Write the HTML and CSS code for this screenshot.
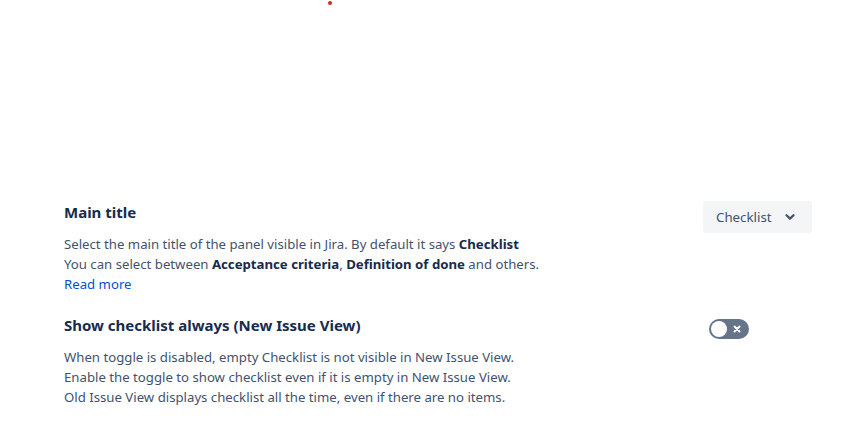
FILE: index.html
```html
<!DOCTYPE html>
<html lang="en">
<head>
<meta charset="utf-8">
<title>Checklist settings</title>
<link rel="stylesheet" href="styles.css">
</head>
<body>
<span class="dot"></span>
<main class="settings">
  <section class="row">
    <div class="info">
      <h3 class="title">Main title</h3>
      <p class="desc">Select the main title of the panel visible in Jira. By default it says <b>Checklist</b><br>You can select between <b>Acceptance criteria</b>, <b>Definition of done</b> and others.<br><a href="#" class="link">Read more</a></p>
    </div>
    <div class="control">
      <button class="select">Checklist
        <svg class="chev" width="10" height="8" viewBox="0 0 10 8"><path d="M1.5 2.2 L5 5.6 L8.5 2.2" fill="none" stroke="#42526e" stroke-width="2.2" stroke-linecap="round" stroke-linejoin="round"/></svg>
      </button>
    </div>
  </section>
  <section class="row row2">
    <div class="info">
      <h3 class="title">Show checklist always (New Issue View)</h3>
      <p class="desc">When toggle is disabled, empty Checklist is not visible in New Issue View.<br>Enable the toggle to show checklist even if it is empty in New Issue View.<br>Old Issue View displays checklist all the time, even if there are no items.</p>
    </div>
    <div class="control">
      <span class="toggle-wrap">
        <span class="toggle">
          <span class="knob"></span>
          <svg class="x" width="8" height="8" viewBox="0 0 8 8"><path d="M1.5 1.5 L6.5 6.5 M6.5 1.5 L1.5 6.5" stroke="#fff" stroke-width="2" stroke-linecap="round"/></svg>
        </span>
      </span>
    </div>
  </section>
</main>
</body>
</html>
```
FILE: styles.css
```css
html, body {
  margin: 0;
  padding: 0;
  background: #ffffff;
}
body {
  font-family: "Noto Sans", "Open Sans", sans-serif;
  color: #172b4d;
  width: 848px;
  height: 422px;
  position: relative;
  overflow: hidden;
}
.dot {
  position: absolute;
  left: 328px;
  top: 1px;
  width: 4px;
  height: 4px;
  border-radius: 50%;
  background: #e2201c;
}
.settings {
  padding: 202px 36px 0 64px;
  display: flex;
  flex-direction: column;
  gap: 21px;
}
.row {
  display: flex;
  align-items: flex-start;
  justify-content: space-between;
}
.info {
  flex: 1;
}
.title {
  margin: 0 0 12px;
  font-size: 15px;
  line-height: 20px;
  font-weight: 700;
  color: #172b4d;
}
.desc {
  margin: 0;
  font-size: 13.2px;
  line-height: 20px;
  color: #42526e;
}
.desc b {
  color: #172b4d;
  font-weight: 700;
}
.link {
  color: #0052cc;
  text-decoration: none;
}
.control {
  width: 109px;
  display: flex;
}
.row:first-child .control {
  margin-top: -1px;
}
.select {
  width: 109px;
  height: 32px;
  border: none;
  border-radius: 3px;
  background: #f4f5f7;
  color: #42526e;
  font-family: inherit;
  font-size: 13.3px;
  padding: 0 0 0 13px;
  display: flex;
  align-items: center;
  gap: 13px;
  cursor: pointer;
}
.chev {
  display: block;
}
.toggle-wrap {
  padding: 4px 6px;
}
.toggle {
  width: 40px;
  height: 20px;
  border-radius: 10px;
  background: #66748a;
  display: flex;
  align-items: center;
  justify-content: space-between;
  padding: 0 8px 0 2px;
  box-sizing: border-box;
}
.knob {
  width: 16px;
  height: 16px;
  border-radius: 50%;
  background: #ffffff;
}
.x {
  display: block;
}
```
